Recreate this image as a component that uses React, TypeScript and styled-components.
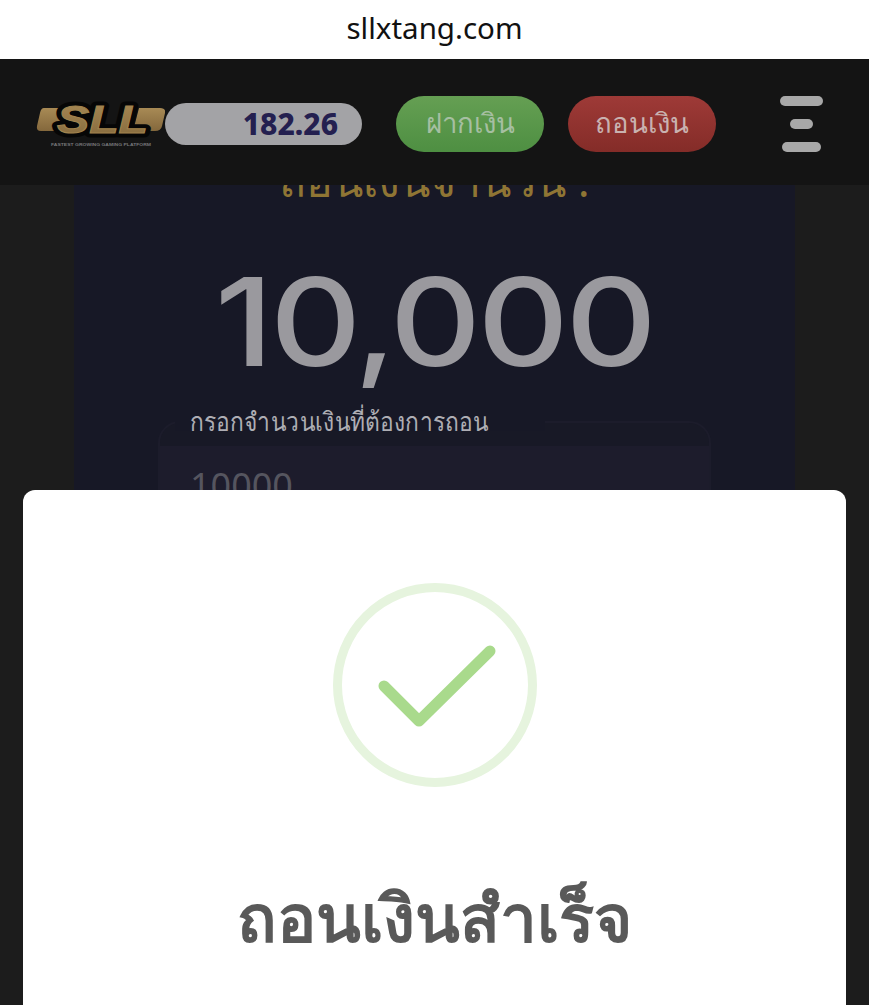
import styled, { createGlobalStyle } from "styled-components";

const GlobalStyle = createGlobalStyle`
  html, body {
    margin: 0;
    padding: 0;
    height: 100%;
    overflow: hidden;
    background: #1c1c1c;
    font-family: "Noto Sans", "Liberation Sans", sans-serif;
  }
`;

const Logo = () => (
  <LogoBox>
    <svg width="130" height="52" viewBox="0 0 130 52">
      <defs>
        <linearGradient id="gold" x1="0" y1="0" x2="0" y2="1">
          <stop offset="0" stopColor="#a88a55" />
          <stop offset="1" stopColor="#84683c" />
        </linearGradient>
      </defs>
      <path d="M9 10H30L24 33H6Q1 33 2 28L5 15Q6 10 9 10Z" fill="url(#gold)" />
      <path d="M104 10H125Q131 10 130 15L127 28Q126 33 120 33H98Z" fill="url(#gold)" />
      <text
        x="22"
        y="35"
        textLength="91"
        lengthAdjust="spacingAndGlyphs"
        fontFamily="Liberation Sans"
        fontWeight="700"
        fontStyle="italic"
        fontSize="38"
        fill="#060606"
        stroke="#060606"
        strokeWidth="9"
        strokeLinejoin="round"
      >
        SLL
      </text>
      <text
        x="22"
        y="35"
        textLength="91"
        lengthAdjust="spacingAndGlyphs"
        fontFamily="Liberation Sans"
        fontWeight="700"
        fontStyle="italic"
        fontSize="38"
        fill="url(#gold)"
        stroke="#a0834e"
        strokeWidth="1"
      >
        SLL
      </text>
      <text
        x="16"
        y="48"
        textLength="100"
        lengthAdjust="spacingAndGlyphs"
        fontFamily="Liberation Sans"
        fontWeight="700"
        fontSize="4.4"
        fill="#77777a"
      >
        FASTEST GROWING GAMING PLATFORM
      </text>
    </svg>
  </LogoBox>
);

const SuccessIcon = () => (
  <svg width="206" height="206" viewBox="0 0 206 206">
    <circle cx="103" cy="103" r="97.5" fill="none" stroke="#e6f4de" strokeWidth="9" />
    <path
      d="M52 104L87 139L158 69"
      fill="none"
      stroke="#a9da8c"
      strokeWidth="11"
      strokeLinecap="round"
      strokeLinejoin="round"
    />
  </svg>
);

export default function App() {
  return (
    <Screen>
      <GlobalStyle />
      <AddressBar>sllxtang.com</AddressBar>
      <Header>
        <Logo />
        <Balance>182.26</Balance>
        <ActionButton $tone="green">ฝากเงิน</ActionButton>
        <ActionButton $tone="red">ถอนเงิน</ActionButton>
        <Burger>
          <BurgerLine $width={43} />
          <BurgerLine $width={23} />
          <BurgerLine $width={39} />
        </Burger>
      </Header>
      <Panel>
        <Heading>ถอนเงินจำนวน :</Heading>
        <Amount>10,000</Amount>
        <Field>
          <FieldLabel>
            <LabelText>กรอกจำนวนเงินที่ต้องการถอน</LabelText>
          </FieldLabel>
          <FieldInput>10000</FieldInput>
        </Field>
      </Panel>
      <Modal>
        <SuccessIcon />
        <ModalTitle>ถอนเงินสำเร็จ</ModalTitle>
      </Modal>
    </Screen>
  );
}

const Screen = styled.div`
  position: relative;
  width: 869px;
  height: 1005px;
  overflow: hidden;
  background: #1c1c1c;
`;

const AddressBar = styled.div`
  display: flex;
  height: 59px;
  padding-bottom: 5px;
  box-sizing: border-box;
  justify-content: center;
  align-items: center;
  background: #fff;
  color: #111;
  font-size: 29.5px;
`;

const Header = styled.div`
  position: relative;
  z-index: 2;
  display: flex;
  align-items: center;
  height: 126px;
  padding: 4px 46px 0 35px;
  box-sizing: border-box;
  background: #141414;
`;

const LogoBox = styled.div`
  display: flex;
  width: 130px;
  height: 52px;
`;

const Balance = styled.div`
  width: 197px;
  height: 42px;
  padding-right: 24px;
  box-sizing: border-box;
  border-radius: 21px;
  background: #a3a3a6;
  color: #242050;
  font-size: 30px;
  font-weight: 800;
  line-height: 42px;
  text-align: right;
`;

const ActionButton = styled.div<{ $tone: "green" | "red" }>`
  display: flex;
  width: 148px;
  height: 56px;
  padding-bottom: 3px;
  box-sizing: border-box;
  justify-content: center;
  align-items: center;
  margin-left: ${({ $tone }) => ($tone === "green" ? "34px" : "24px")};
  border-radius: 28px;
  background: ${({ $tone }) =>
    $tone === "green"
      ? "linear-gradient(#659f53, #4e8f42)"
      : "linear-gradient(#9e3a37, #842c28)"};
  color: ${({ $tone }) => ($tone === "green" ? "#a6bfa2" : "#c9b2b0")};
  font-size: 27.5px;
`;

const Burger = styled.div`
  display: flex;
  flex-direction: column;
  align-items: center;
  gap: 13px;
  margin-left: auto;
`;

const BurgerLine = styled.div<{ $width: number }>`
  width: ${({ $width }) => $width}px;
  height: 10px;
  border-radius: 5px;
  background: #a8a8a8;
`;

const Panel = styled.div`
  display: flex;
  flex-direction: column;
  align-items: center;
  width: 721px;
  height: 500px;
  margin: -30px 0 0 74px;
  background: #171826;
`;

const Heading = styled.div`
  height: 47px;
  color: #8f7534;
  font-size: 44.5px;
  line-height: 50px;
`;

const Amount = styled.div`
  margin-top: 45px;
  color: #9a999e;
  font-family: "Inter", sans-serif;
  font-size: 122px;
  font-weight: 500;
  letter-spacing: -3px;
  line-height: 150px;
  white-space: nowrap;
  transform: scaleX(1.16);
`;

const Field = styled.div`
  position: relative;
  width: 553px;
  height: 140px;
  margin-top: 24px;
  border: 2px solid #1c1c2b;
  border-radius: 22px;
  box-sizing: border-box;
  background: #181926;
`;

const FieldLabel = styled.div`
  position: absolute;
  top: -20px;
  left: 15px;
  width: 370px;
  height: 28px;
  padding-left: 15px;
  box-sizing: border-box;
  background: #171826;
  line-height: 36px;
`;

const LabelText = styled.span`
  display: inline-block;
  color: #aeaeb4;
  font-size: 26px;
  white-space: nowrap;
  transform: scaleX(0.876);
  transform-origin: left center;
`;

const FieldInput = styled.div`
  height: 110px;
  margin-top: 23px;
  padding: 15px 30px;
  box-sizing: border-box;
  background: #1d1c2c;
  color: #55555f;
  font-size: 36px;
`;

const Modal = styled.div`
  position: absolute;
  top: 490px;
  left: 23px;
  z-index: 3;
  display: flex;
  flex-direction: column;
  align-items: center;
  width: 823px;
  height: 560px;
  padding-top: 92px;
  box-sizing: border-box;
  border-radius: 12px;
  background: #fff;
`;

const ModalTitle = styled.div`
  margin-top: 84px;
  color: #595959;
  font-size: 65.5px;
  font-weight: 700;
  line-height: 90px;
`;
